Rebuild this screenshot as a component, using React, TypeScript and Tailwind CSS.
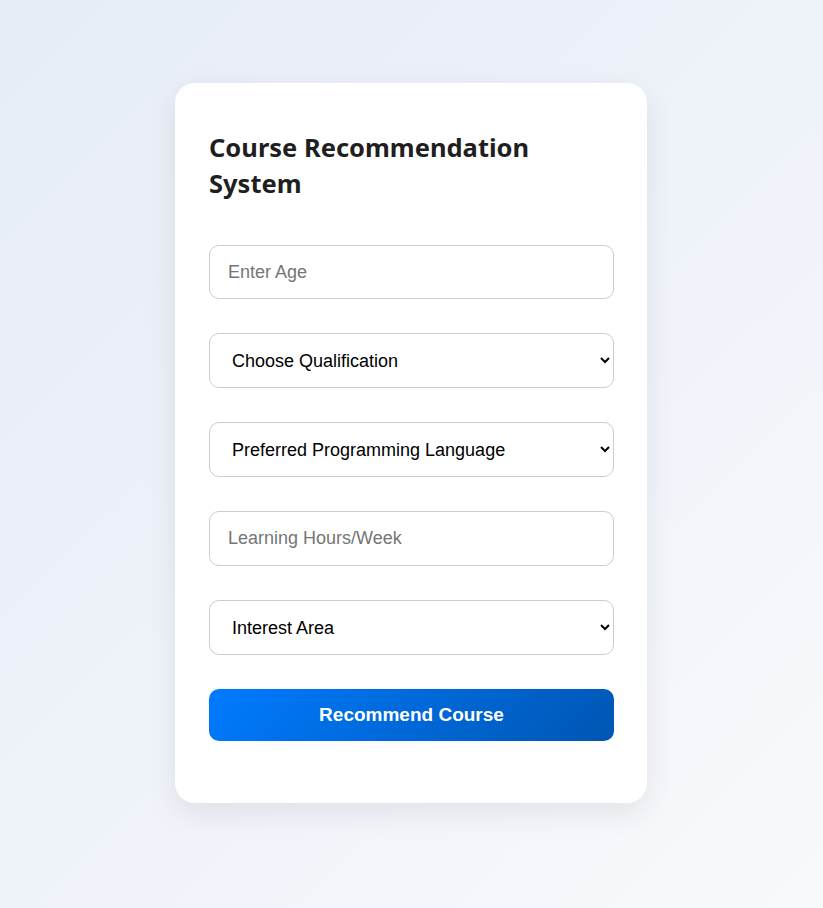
import React from "react";

export default function App() {
  const field =
    "w-full rounded-[10px] border border-[#cccccc] bg-white text-[18px] text-black outline-none";
  return (
    <div
      className="min-h-[908px] w-full flex justify-start items-start pl-[175px] pt-[83px] bg-[linear-gradient(135deg,#e6ecf6_0%,#eef2f9_50%,#f8f9fc_100%)]"
      style={{ fontFamily: '"Liberation Sans", Arial, sans-serif' }}
    >
      <div className="w-[472px] bg-white rounded-[20px] shadow-[0_10px_30px_rgba(0,0,0,0.08)] pl-[34px] pr-[33px] pt-[46px] pb-[62px]">
        <h1
          className="text-[25.5px] leading-[36px] font-bold text-[#1f1f1f] mb-[44px]"
          style={{ fontFamily: '"Noto Sans", "Open Sans", sans-serif' }}
        >
          Course Recommendation
          <br />
          System
        </h1>
        <div className="flex flex-col gap-[34px]">
          <input
            type="text"
            placeholder="Enter Age"
            className={field + " h-[54px] px-[18px] placeholder:text-[#757575]"}
          />
          <select className={field + " h-[55px] px-[18px]"} defaultValue="">
            <option value="">Choose Qualification</option>
          </select>
          <select className={field + " h-[55px] px-[18px]"} defaultValue="">
            <option value="">Preferred Programming Language</option>
          </select>
          <input
            type="text"
            placeholder="Learning Hours/Week"
            className={field + " h-[55px] px-[18px] placeholder:text-[#757575]"}
          />
          <select className={field + " h-[55px] px-[18px]"} defaultValue="">
            <option value="">Interest Area</option>
          </select>
          <button className="w-full h-[52px] rounded-[10px] text-white font-bold text-[19px] bg-[linear-gradient(135deg,#007bff,#0056b3)]">
            Recommend Course
          </button>
        </div>
      </div>
    </div>
  );
}
